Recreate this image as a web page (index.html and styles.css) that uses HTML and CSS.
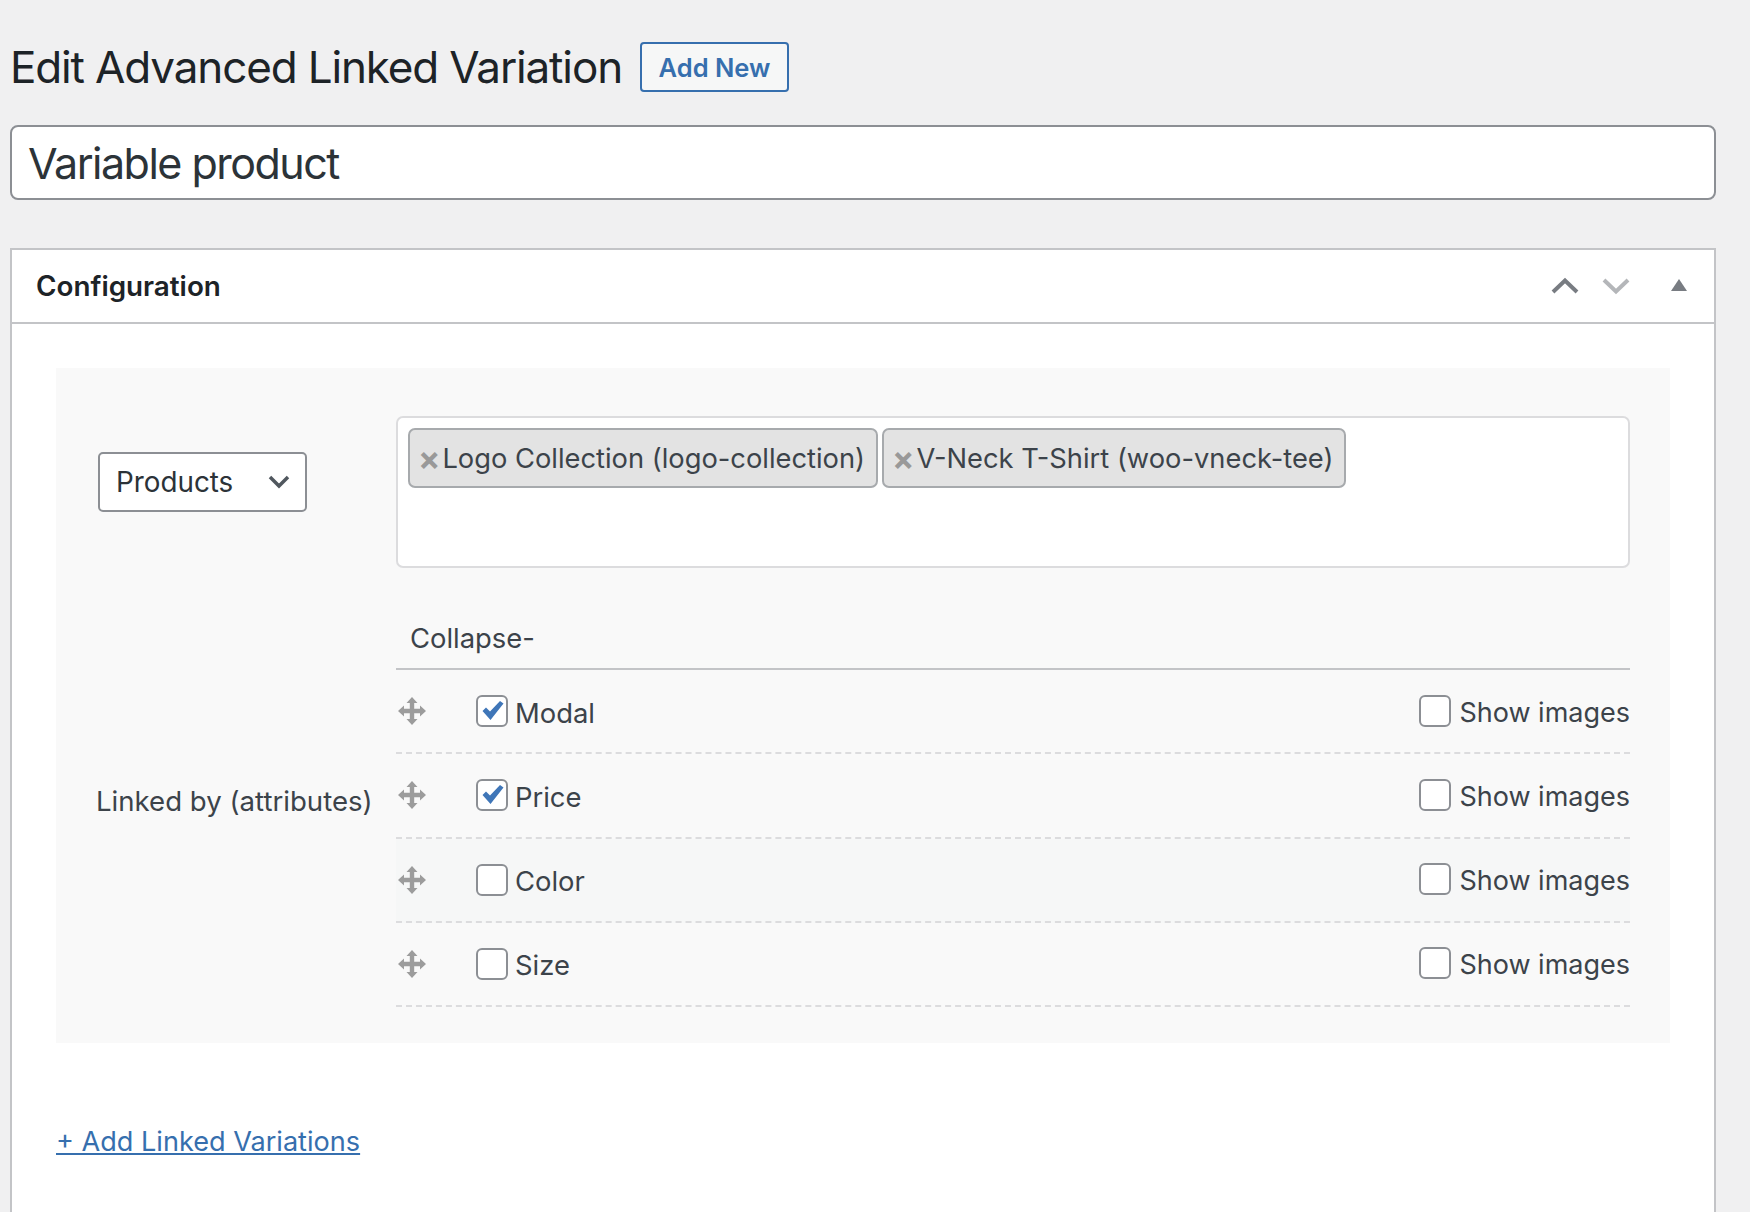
FILE: index.html
```html
<!DOCTYPE html>
<html lang="en">
<head>
    <meta charset="UTF-8">
    <title>Edit Advanced Linked Variation</title>
    <link rel="stylesheet" href="styles.css">
</head>
<body>
<div class="wrap">
    <div class="page-head">
        <h1>Edit Advanced Linked Variation</h1>
        <a class="add-new">Add New</a>
    </div>
    <div class="title-input">Variable product</div>

    <div class="postbox">
        <div class="postbox-head">
            <h2>Configuration</h2>
            <div class="head-icons">
                <svg class="ico-chev" viewBox="0 0 28 18"><polyline points="2,15 14,3.500 26,15" class="dark"/></svg>
                <svg class="ico-chev" viewBox="0 0 28 18"><polyline points="2,3 14,14.500 26,3" class="light"/></svg>
                <svg class="ico-tri" viewBox="0 0 16 12"><polygon points="8,0 16,12 0,12"/></svg>
            </div>
        </div>
        <div class="postbox-body">
            <div class="panel">
                <div class="type-cell">
                    <div class="select">
                        <span>Products</span>
                        <svg viewBox="0 0 22 14"><polyline points="2,2 11,11 20,2"/></svg>
                    </div>
                </div>
                <div class="tags">
                    <span class="tag"><i>×</i>Logo Collection (logo-collection)</span>
                    <span class="tag"><i>×</i>V-Neck T-Shirt (woo-vneck-tee)</span>
                </div>

                <div class="attr-label">Linked by (attributes)</div>
                <div class="attrs">
                    <div class="collapse">Collapse-</div>

                    <div class="attr-row">
                        <svg class="drag" viewBox="0 0 28 28"><use href="#move"/></svg>
                        <span class="check on"><svg viewBox="0 0 28 28"><path d="M4.500 14L8 10.500l4 4L22 4l3.500 2.500L12.500 23z"/></svg></span>
                        <span class="attr-name">Modal</span>
                        <span class="check right"></span>
                        <span class="show">Show images</span>
                    </div>
                    <div class="attr-row">
                        <svg class="drag" viewBox="0 0 28 28"><use href="#move"/></svg>
                        <span class="check on"><svg viewBox="0 0 28 28"><path d="M4.500 14L8 10.500l4 4L22 4l3.500 2.500L12.500 23z"/></svg></span>
                        <span class="attr-name">Price</span>
                        <span class="check right"></span>
                        <span class="show">Show images</span>
                    </div>
                    <div class="attr-row alt">
                        <svg class="drag" viewBox="0 0 28 28"><use href="#move"/></svg>
                        <span class="check"></span>
                        <span class="attr-name">Color</span>
                        <span class="check right"></span>
                        <span class="show">Show images</span>
                    </div>
                    <div class="attr-row">
                        <svg class="drag" viewBox="0 0 28 28"><use href="#move"/></svg>
                        <span class="check"></span>
                        <span class="attr-name">Size</span>
                        <span class="check right"></span>
                        <span class="show">Show images</span>
                    </div>
                </div>
            </div>
            <a class="add-link">+ Add Linked Variations</a>
        </div>
    </div>
</div>

<svg class="defs" width="0" height="0">
    <symbol id="move" viewBox="0 0 28 28">
        <path d="M14 0L19.500 6H16.200V11.800H22V8.500L28 14L22 19.500V16.200H16.200V22H19.500L14 28L8.500 22H11.800V16.200H6V19.500L0 14L6 8.500V11.800H11.800V6H8.500Z"/>
    </symbol>
</svg>
</body>
</html>
```

FILE: styles.css
```css
* {
    box-sizing: border-box;
}
html, body {
    margin: 0;
    padding: 0;
    height: 100%;
    overflow: hidden;
}
body {
    background: #f0f0f1;
    color: #3c434a;
    font-family: Inter, "Noto Sans", sans-serif;
    font-size: 27.400px;
}
.wrap {
    padding: 42px 34px 0 10px;
}
.page-head {
    display: flex;
    align-items: center;
    gap: 18px;
    height: 50px;
}
h1 {
    margin: 0;
    font-size: 44px;
    font-weight: 400;
    letter-spacing: -1.140px;
    color: #1d2327;
}
.add-new {
    display: flex;
    align-items: center;
    justify-content: center;
    width: 149px;
    height: 50px;
    border: 2px solid #366fae;
    border-radius: 4px;
    background: #f6f7f7;
    color: #366fae;
    font-size: 25.500px;
    font-weight: 600;
}
.title-input {
    display: flex;
    align-items: center;
    height: 75px;
    margin-top: 33px;
    padding-left: 16px;
    background: #fff;
    border: 2px solid #8c8f94;
    border-radius: 8px;
    color: #2c3338;
    font-size: 43px;
    letter-spacing: -1.500px;
}
.postbox {
    height: 1000px;
    margin-top: 48px;
    background: #fff;
    border: 2px solid #c3c4c7;
}
.postbox-head {
    display: flex;
    align-items: center;
    justify-content: space-between;
    height: 74px;
    border-bottom: 2px solid #c3c4c7;
    padding-left: 24px;
}
h2 {
    margin: 0;
    font-size: 27.800px;
    font-weight: 600;
    color: #1d2327;
}
.head-icons {
    display: flex;
    align-items: center;
    gap: 23px;
    padding-right: 27px;
}
.ico-chev {
    width: 28px;
    height: 18px;
}
.ico-chev polyline {
    fill: none;
    stroke-width: 4;
}
.ico-chev .dark {
    stroke: #787c82;
}
.ico-chev .light {
    stroke: #b4b6b9;
}
.ico-tri {
    width: 16px;
    height: 12px;
    margin-left: 18px;
    margin-bottom: 3px;
    fill: #787c82;
}
.postbox-body {
    padding: 44px 44px 0;
}
.panel {
    display: grid;
    grid-template-columns: 300px 1fr;
    grid-template-rows: 152px auto;
    align-content: start;
    height: 675px;
    padding: 48px 40px 0;
    background: #f9f9f9;
}
.type-cell {
    padding: 36px 0 0 2px;
}
.select {
    display: flex;
    align-items: center;
    justify-content: space-between;
    width: 209px;
    height: 60px;
    padding: 0 15px 0 16px;
    background: #fff;
    border: 2px solid #8c8f94;
    border-radius: 5px;
    color: #2c3338;
    font-size: 27.800px;
}
.select svg {
    width: 22px;
    height: 14px;
    fill: none;
    stroke: #50575e;
    stroke-width: 3.500;
}
.tags {
    display: flex;
    align-items: flex-start;
    gap: 4px;
    padding: 10px;
    background: #fff;
    border: 2px solid #dcdcde;
    border-radius: 7px;
}
.tag {
    display: flex;
    align-items: center;
    height: 60px;
    padding: 0 11px 0 8px;
    background: #e3e3e3;
    border: 2px solid #a7aaad;
    border-radius: 7px;
    font-size: 27.300px;
}
.tag i {
    margin-right: 2px;
    color: #999;
    font-size: 33px;
    font-style: normal;
    font-weight: 700;
    line-height: 1;
}
.attr-label {
    align-self: center;
    margin-top: 26px;
    font-size: 27.600px;
}
.attrs {
    margin-top: 40px;
}
.collapse {
    height: 62px;
    padding: 13px 0 0 14px;
    border-bottom: 2px solid #c3c4c7;
}
.attr-row {
    display: flex;
    align-items: center;
    height: 84.250px;
    border-bottom: 2px dashed #dcdcde;
}
.attr-row.alt {
    background: #f6f7f7;
}
.drag {
    width: 28px;
    height: 28px;
    margin: 0 50px 0 2px;
    fill: #9c9c9c;
}
.check {
    flex: none;
    display: flex;
    align-items: center;
    justify-content: center;
    width: 32px;
    height: 32px;
    background: #fff;
    border: 2px solid #8c8f94;
    border-radius: 6px;
}
.check.right {
    margin-bottom: 1px;
}
.check svg {
    flex: none;
    width: 28px;
    height: 28px;
    fill: #3f76b8;
}
.attr-name {
    flex: 1;
    margin-left: 7px;
    padding-top: 3px;
}
.show {
    margin-left: 8px;
    padding-top: 2px;
    font-size: 27px;
}
.add-link {
    display: inline-block;
    margin-top: 82px;
    color: #366fae;
    font-size: 27.100px;
    text-decoration: underline;
}
.defs {
    position: absolute;
}
```
